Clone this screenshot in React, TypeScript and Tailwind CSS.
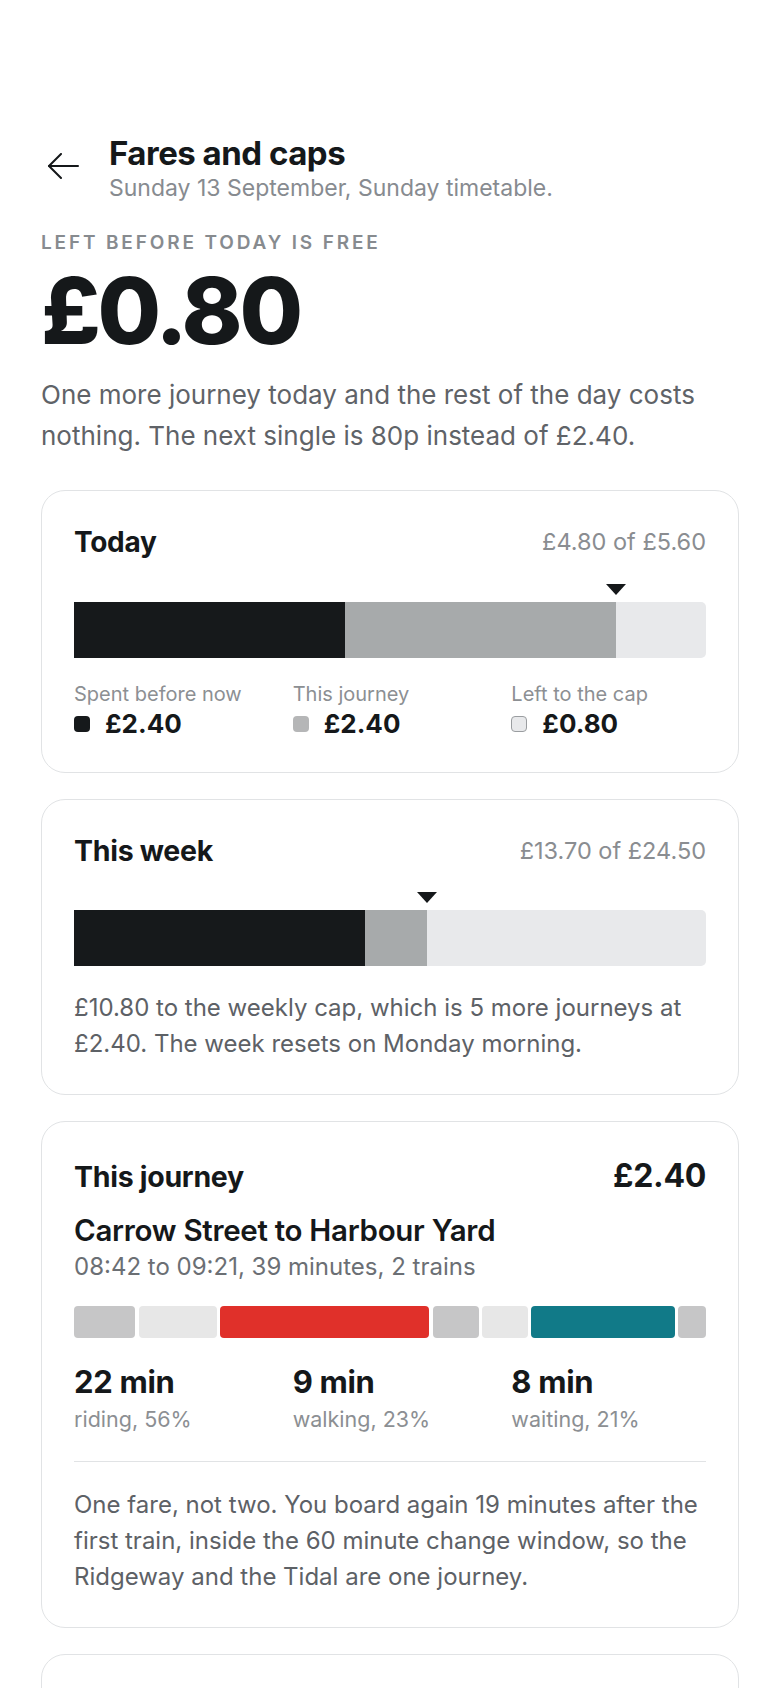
import React from 'react';

// widths follow the minutes of each leg (walk, wait, ride...)
const segments = [
  { id: 1, weight: 57, tone: 'bg-[#c6c6c7]' },
  { id: 2, weight: 72, tone: 'bg-[#e7e7e7]' },
  { id: 3, weight: 194, tone: 'bg-[#e0302a]' },
  { id: 4, weight: 43, tone: 'bg-[#c6c6c7]' },
  { id: 5, weight: 42, tone: 'bg-[#e7e7e7]' },
  { id: 6, weight: 133, tone: 'bg-[#117a88]' },
  { id: 7, weight: 26, tone: 'bg-[#c6c6c7]' },
];

const Marker: React.FC<{ left: string }> = ({ left }) => (
  <svg
    className="absolute -top-[18px] -translate-x-1/2"
    style={{ left }}
    width="20"
    height="11"
    viewBox="0 0 20 11"
  >
    <path d="M0 0 H20 L10 11 Z" fill="#15181a" />
  </svg>
);

const CapBar: React.FC<{ spent: number; journey: number; cap: number; className?: string }> = ({ spent, journey, cap, className = '' }) => {
  const a = (spent / cap) * 100;
  const b = (journey / cap) * 100;
  return (
    <div className={`relative ${className}`}>
      <Marker left={`${a + b}%`} />
      <div className="flex h-[56px] w-full overflow-hidden rounded-r-[5px] bg-[#e8e9eb]">
        <div className="h-full bg-[#16191b]" style={{ width: `${a}%` }} />
        <div className="h-full bg-[#a7aaab]" style={{ width: `${b}%` }} />
      </div>
    </div>
  );
};

const Card: React.FC<{ children: React.ReactNode; className?: string }> = ({ children, className = '' }) => (
  <div className={`rounded-[24px] border-[1.5px] border-[#e1e3e5] bg-white px-8 ${className}`}>{children}</div>
);

const Legend: React.FC<{ label: string; value: string; swatch: string }> = ({ label, value, swatch }) => (
  <div>
    <p className="text-[20px] leading-[24px] text-[#8c8f93]">{label}</p>
    <div className="mt-[2px] flex items-center gap-[15px]">
      <span className={`h-4 w-4 shrink-0 rounded-[4px] ${swatch}`} />
      <span className="text-[26px] leading-[32px] font-bold">{value}</span>
    </div>
  </div>
);

const Stat: React.FC<{ value: string; label: string }> = ({ value, label }) => (
  <div>
    <p className="text-[31px] leading-[38px] font-bold tracking-[-0.01em]">{value}</p>
    <p className="mt-[5px] text-[21.5px] leading-[26px] text-[#8c8f93]">{label}</p>
  </div>
);

export default function App() {
  return (
    <div className="min-h-screen bg-white px-[41px] pt-[133px] font-['Inter','Noto_Sans',sans-serif] text-[#15181a]">
      {/* Header */}
      <div className="flex items-start gap-6">
        <button className="mt-[11px] flex h-11 w-11 shrink-0 items-center justify-center">
          <svg width="32" height="26" viewBox="0 0 32 26" fill="none" stroke="#15181a" strokeWidth="2" strokeLinecap="round" strokeLinejoin="round">
            <path d="M31 13H2" />
            <path d="M14 1L2 13L14 25" />
          </svg>
        </button>
        <div>
          <h1 className="text-[33px] leading-[40px] font-bold tracking-[-0.015em]">Fares and caps</h1>
          <p className="text-[23px] leading-[30px] text-[#878b90]">Sunday 13 September, Sunday timetable.</p>
        </div>
      </div>

      {/* Summary */}
      <p className="mt-[28px] text-[19px] leading-[24px] font-semibold uppercase tracking-[0.15em] text-[#878b8f]">
        Left before today is free
      </p>
      <p className="mt-[10px] text-[92px] leading-none font-extrabold tracking-[-0.035em]">£0.80</p>
      <p className="mt-[17px] text-[26px] leading-[41px] text-[#5f6368]">
        One more journey today and the rest of the day costs nothing. The next single is 80p instead of £2.40.
      </p>

      <div className="mt-[34px] flex flex-col gap-[26px]">
        {/* Today */}
        <Card className="pt-[34px] pb-8">
          <div className="flex items-center justify-between">
            <h2 className="text-[28px] leading-[34px] font-bold tracking-[-0.01em]">Today</h2>
            <span className="text-[23.5px] leading-[34px] text-[#8a8d91]">£4.80 of £5.60</span>
          </div>
          <CapBar spent={2.4} journey={2.4} cap={5.6} className="mt-[43px]" />
          <div className="mt-6 grid grid-cols-3 gap-6">
            <Legend label="Spent before now" value="£2.40" swatch="bg-[#16191b]" />
            <Legend label="This journey" value="£2.40" swatch="bg-[#b5b6b7]" />
            <Legend label="Left to the cap" value="£0.80" swatch="border-[1.5px] border-[#9a9da0] bg-[#e8e9eb]" />
          </div>
        </Card>

        {/* This week */}
        <Card className="pt-[34px] pb-8">
          <div className="flex items-center justify-between">
            <h2 className="text-[28.5px] leading-[34px] font-bold tracking-[-0.01em]">This week</h2>
            <span className="text-[23.5px] leading-[34px] text-[#8a8d91]">£13.70 of £24.50</span>
          </div>
          <CapBar spent={11.3} journey={2.4} cap={24.5} className="mt-[42px]" />
          <p className="mt-6 text-[24px] leading-[36px] text-[#5d6166]">
            £10.80 to the weekly cap, which is 5 more journeys at £2.40. The week resets on Monday morning.
          </p>
        </Card>

        {/* This journey */}
        <Card className="pt-8 pb-8">
          <div className="flex items-baseline justify-between">
            <h2 className="text-[28.5px] leading-[44px] font-bold tracking-[-0.01em]">This journey</h2>
            <span className="text-[32px] leading-[44px] font-bold tracking-[-0.01em]">£2.40</span>
          </div>
          <p className="mt-[13px] text-[29.5px] leading-[36px] font-semibold tracking-[-0.01em]">Carrow Street to Harbour Yard</p>
          <p className="mt-[5px] text-[24px] leading-[28px] text-[#6b6f74]">08:42 to 09:21, 39 minutes, 2 trains</p>

          <div className="mt-[25px] flex h-8 gap-[3.5px]">
            {segments.map((s) => (
              <div key={s.id} className={`h-full basis-0 rounded-[4px] ${s.tone}`} style={{ flexGrow: s.weight }} />
            ))}
          </div>

          <div className="mt-[25px] grid grid-cols-3 gap-6 border-b-[1.5px] border-[#e1e3e5] pb-[29px]">
            <Stat value="22 min" label="riding, 56%" />
            <Stat value="9 min" label="walking, 23%" />
            <Stat value="8 min" label="waiting, 21%" />
          </div>

          <p className="pt-[25px] text-[24px] leading-[36px] text-[#5d6166]">
            One fare, not two. You board again 19 minutes after the first train, inside the 60 minute change window, so the Ridgeway and the Tidal are one journey.
          </p>
        </Card>

        <Card className="h-[240px]">
          <div />
        </Card>
      </div>
    </div>
  );
}
